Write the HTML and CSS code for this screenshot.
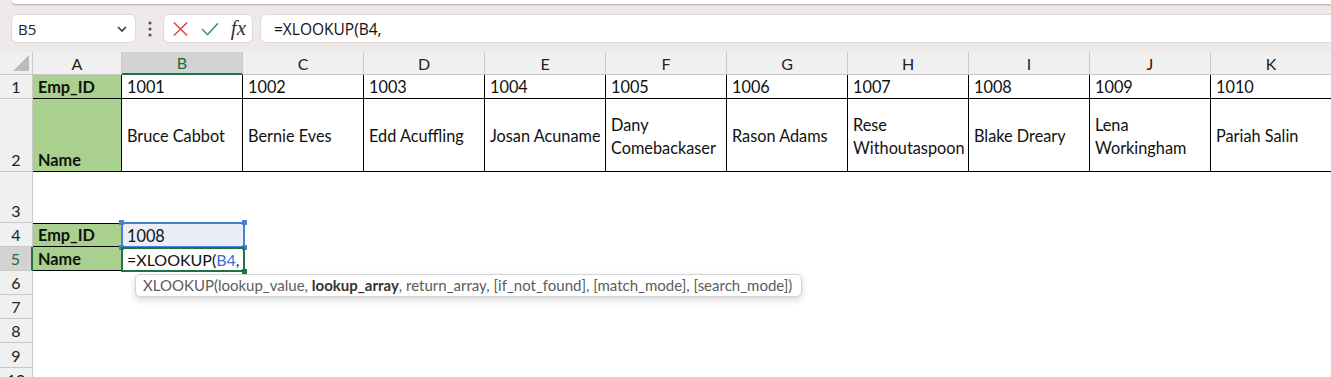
FILE: index.html
```html
<!DOCTYPE html>
<html>
<head>
<meta charset="utf-8">
<link rel="stylesheet" href="styles.css">
</head>
<body>
<div class="topstrip"></div>
<div class="fbar">
  <div class="namebox"><span>B5</span>
    <svg class="chev" width="10" height="6" viewBox="0 0 10 6"><polyline points="1,1 5,5 9,1" fill="none" stroke="#333" stroke-width="1.6"/></svg>
  </div>
  <div class="dots"><svg width="4" height="16" viewBox="0 0 4 16"><circle cx="2" cy="2" r="1.6" fill="#555"/><circle cx="2" cy="8" r="1.6" fill="#555"/><circle cx="2" cy="14" r="1.6" fill="#555"/></svg></div>
  <div class="fxbox">
    <svg width="16" height="16" viewBox="0 0 16 16"><path d="M1 1 L15 15 M15 1 L1 15" stroke="#e2463f" stroke-width="1.6" fill="none"/></svg>
    <svg width="19" height="14" viewBox="0 0 19 14"><polyline points="1,7 7,13 18,1" stroke="#3c9e5f" stroke-width="1.6" fill="none"/></svg>
    <span class="fx">fx</span>
  </div>
  <div class="finput">=XLOOKUP(B4,</div>
</div>
<div class="sheet">
  <div class="corner"><svg width="16" height="16" viewBox="0 0 16 16"><polygon points="16,0 16,16 0,16" fill="#bcbcbc"/></svg></div>
  <div class="ch">A</div><div class="ch sel">B</div><div class="ch">C</div><div class="ch">D</div><div class="ch">E</div><div class="ch">F</div><div class="ch">G</div><div class="ch">H</div><div class="ch">I</div><div class="ch">J</div><div class="ch">K</div>

  <div class="rh">1</div>
  <div class="c b g bold">Emp_ID</div>
  <div class="c b">1001</div><div class="c b">1002</div><div class="c b">1003</div><div class="c b">1004</div><div class="c b">1005</div><div class="c b">1006</div><div class="c b">1007</div><div class="c b">1008</div><div class="c b">1009</div><div class="c b">1010</div>

  <div class="rh">2</div>
  <div class="c b g bold">Name</div>
  <div class="c b mid">Bruce Cabbot</div>
  <div class="c b mid">Bernie Eves</div>
  <div class="c b mid">Edd Acuffling</div>
  <div class="c b mid">Josan Acuname</div>
  <div class="c b mid">Dany<br>Comebackaser</div>
  <div class="c b mid">Rason Adams</div>
  <div class="c b mid">Rese<br>Withoutaspoon</div>
  <div class="c b mid">Blake Dreary</div>
  <div class="c b mid">Lena<br>Workingham</div>
  <div class="c b mid">Pariah Salin</div>

  <div class="rh">3</div><div class="rest"></div>

  <div class="rh">4</div>
  <div class="c b g bold top">Emp_ID</div>
  <div class="c b4">1008</div>
  <div class="rest2"></div>

  <div class="rh rsel">5</div>
  <div class="c b g bold">Name</div>
  <div class="c formula">=XLOOKUP(<span class="ref">B4</span>,</div>
  <div class="rest2"></div>

  <div class="rh">6</div><div class="rest"></div>
  <div class="rh">7</div><div class="rest"></div>
  <div class="rh">8</div><div class="rest"></div>
  <div class="rh">9</div><div class="rest"></div>
  <div class="rh">10</div><div class="rest"></div>

  <div class="selblue"><i class="h tl"></i><i class="h tr"></i><i class="h bl"></i><i class="h br"></i></div>
  <div class="selgreen"><i class="hg"></i></div>
  <div class="tip">XLOOKUP(lookup_value, <b>lookup_array</b>, return_array, [if_not_found], [match_mode], [search_mode])</div>
</div>
</body>
</html>
```

FILE: styles.css
```css
html, body { margin: 0; padding: 0; }
body {
  width: 1331px; height: 377px; overflow: hidden;
  background: #eeeaea;
  font-family: Lato, "Open Sans", sans-serif;
  color: #111;
}
.topstrip {
  height: 4px; margin-left: 12px; background: #fff;
  border-bottom-left-radius: 7px;
  box-shadow: 0 1px 2px rgba(0,0,0,.28);
}
.fbar {
  display: flex; height: 29px; margin: 10px 0 9px 11px;
}
.namebox {
  width: 125px; box-sizing: border-box; background: #fff;
  border: 1px solid #e0dada; border-radius: 6px;
  display: flex; align-items: center; justify-content: space-between;
  padding: 0 8px 0 6px;
  font-family: "Open Sans", sans-serif; font-size: 15px; color: #222;
}
.dots { width: 27px; display: flex; align-items: center; justify-content: center; }
.fxbox {
  width: 90px; box-sizing: border-box; background: #fff;
  border: 1px solid #e0dada; border-radius: 6px;
  display: flex; align-items: center; padding: 0 6px 0 9px; gap: 13px;
}
.fx {
  font-family: "Liberation Serif", serif; font-style: italic; font-size: 21px;
  color: #333; margin-left: -1px; line-height: 1;
}
.finput {
  flex: 1; margin-left: 7px; margin-right: -10px; background: #fff;
  border: 1px solid #e0dada; border-radius: 6px;
  display: flex; align-items: center; padding-left: 13px;
  font-family: "Open Sans", sans-serif; font-size: 15.5px; color: #111;
}
.sheet {
  position: relative; display: grid; width: 1332px; background: #fff;
  grid-template-columns: 33px 89px repeat(10, 121px);
  grid-template-rows: 23px 24px 73px 51px 24px 24px 24px 24px 24px 25px 24px;
}
.corner {
  background: #f0f0f0; border-right: 1px solid #c8c8c8; border-bottom: 1px solid #c8c8c8;
  box-sizing: border-box; display: flex; align-items: flex-end; justify-content: flex-end;
  padding: 0 3px 3px 0;
}
.ch {
  background: #f0f0f0; border-right: 1px solid #c8c8c8; border-bottom: 1px solid #c8c8c8;
  box-sizing: border-box; display: flex; align-items: center; justify-content: center;
  font-size: 16px; color: #222;
}
.ch.sel { background: #d3d3d3; color: #1e6b41; border-bottom: 2px solid #217346; }
.rh {
  background: #f0f0f0; border-right: 1px solid #c8c8c8; border-bottom: 1px solid #c8c8c8;
  box-sizing: border-box; display: flex; align-items: flex-end; justify-content: center;
  font-size: 16px; color: #222; padding-bottom: 1px; line-height: 20px;
}
.rh.rsel { background: #d3d3d3; color: #1e6b41; border-right: 2px solid #217346; }
.c {
  box-sizing: border-box; padding: 0 4px 1px 5px; font-size: 16.3px; line-height: 20px;
  display: flex; align-items: flex-end; white-space: nowrap; overflow: hidden;
}
.c.b { border-right: 1px solid #000; border-bottom: 1px solid #000; }
.c.top { border-top: 1px solid #000; }
.c.g { background: #a9d08e; }
.c.bold { font-weight: 700; }
.c.mid { align-items: center; line-height: 23.5px; padding: 2px 4px 0 5px; }
.c.b4 { background: #e9eef8; }
.c.formula { font-size: 16px; }
.ref { color: #3b6fcf; }
.rest { grid-column: 2 / -1; }
.rest2 { grid-column: 4 / -1; }
.selblue {
  position: absolute; left: 121px; top: 170px; width: 124px; height: 26px;
  box-sizing: border-box; border: 2px solid #4a7fd6;
}
.h { position: absolute; width: 5px; height: 5px; background: #4a7fd6; }
.tl { left: -4px; top: -4px; }
.tr { right: -4px; top: -4px; }
.bl { left: -4px; bottom: -4px; }
.br { right: -4px; bottom: -4px; }
.selgreen {
  position: absolute; left: 121px; top: 195px; width: 124px; height: 25px;
  box-sizing: border-box; border: 2px solid #217346;
}
.hg { position: absolute; right: -4px; bottom: -4px; width: 5px; height: 5px; background: #217346; }
.tip {
  position: absolute; left: 135px; top: 222px; width: 667px; height: 23px;
  box-sizing: border-box; background: #fff; border: 1px solid #d3d3d3; border-radius: 5px;
  box-shadow: 0 3px 7px rgba(0,0,0,.16);
  padding-left: 7px; font-size: 15px; line-height: 21px; color: #5c5c5c; white-space: nowrap;
}
.tip b { color: #333; font-weight: 700; }
```
